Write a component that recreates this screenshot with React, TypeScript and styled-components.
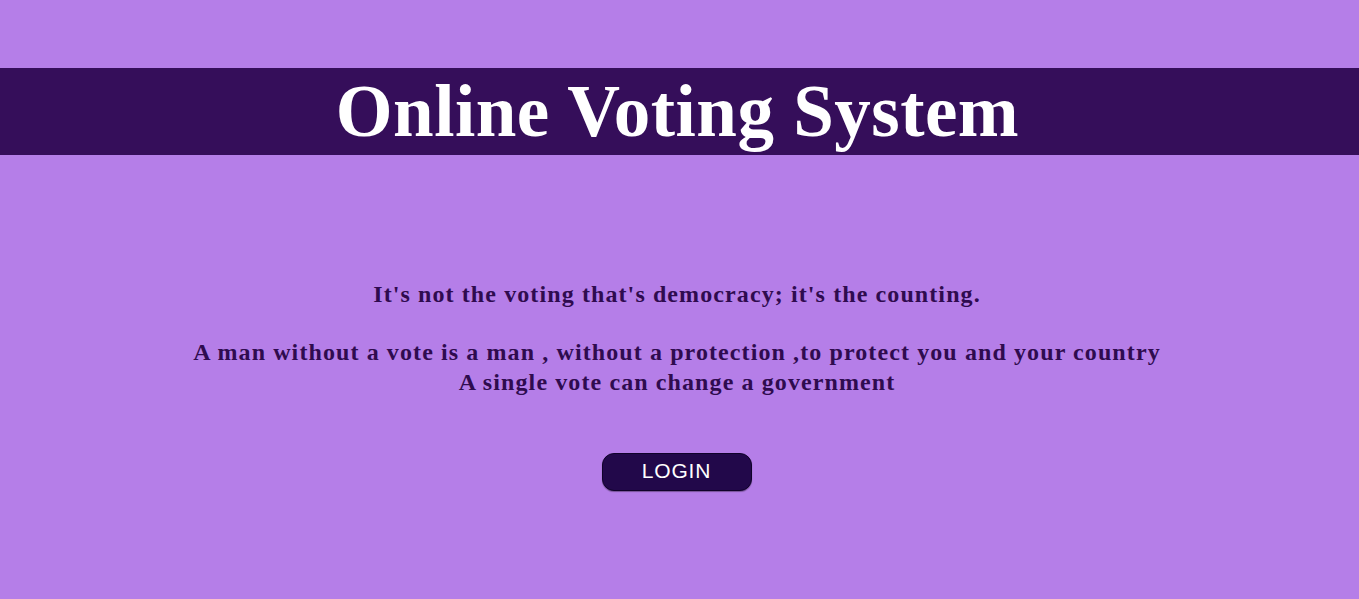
import React from "react";
import styled, { createGlobalStyle } from "styled-components";

const Global = createGlobalStyle`
  html, body { margin: 0; padding: 0; }
  body {
    background: #b57ee8;
    font-family: "Liberation Serif", "Times New Roman", serif;
    min-height: 599px;
  }
`;

const Page = styled.div`
  display: flex;
  flex-direction: column;
  align-items: stretch;
  padding-top: 68px;
`;

const Header = styled.header`
  height: 87px;
  background: #350e5a;
  display: flex;
  align-items: center;
  justify-content: center;
  padding-right: 4px;
`;

const Title = styled.h1`
  margin: 0;
  color: #ffffff;
  font-family: "Liberation Serif", "Times New Roman", serif;
  font-weight: bold;
  font-size: 73px;
  letter-spacing: 0.5px;
  line-height: 1;
`;

const Quotes = styled.section`
  display: flex;
  flex-direction: column;
  align-items: center;
  margin-top: 124px;
  padding-right: 5px;
  color: #2f0b4f;
  font-weight: bold;
  font-size: 24px;
  letter-spacing: 1.1px;
  text-align: center;
`;

const Quote = styled.p<{ $gap?: number }>`
  margin: ${(p) => p.$gap ?? 0}px 0 0;
  line-height: 30px;
`;

const Login = styled.button`
  align-self: center;
  margin-top: 56px;
  margin-right: 6px;
  width: 150px;
  height: 38px;
  padding: 0 0 3px;
  border-radius: 12px;
  border: 1px solid #10022a;
  box-shadow: 0 1px 1px rgba(0, 0, 0, 0.35);
  background: #22084a;
  color: #ffffff;
  font-family: "Liberation Sans", Arial, sans-serif;
  font-size: 21px;
  letter-spacing: 0.8px;
  cursor: pointer;
`;

export default function App() {
  return (
    <>
      <Global />
      <Page>
        <Header>
          <Title>Online Voting System</Title>
        </Header>
        <Quotes>
          <Quote>It's not the voting that's democracy; it's the counting.</Quote>
          <Quote $gap={28}>
            A man without a vote is a man , without a protection ,to protect you and your country
            <br />
            A single vote can change a government
          </Quote>
        </Quotes>
        <Login>LOGIN</Login>
      </Page>
    </>
  );
}
